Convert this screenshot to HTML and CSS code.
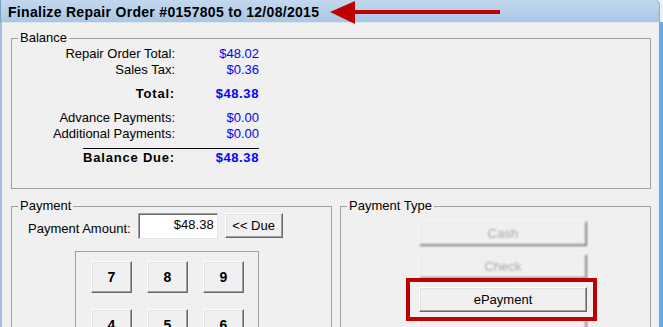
FILE: index.html
```html
<!DOCTYPE html>
<html>
<head>
<meta charset="utf-8">
<title>Finalize Repair Order</title>
<link rel="stylesheet" href="styles.css">
</head>
<body>
<div class="window">
  <div class="titlebar"><span class="title">Finalize Repair Order #0157805 to 12/08/2015</span></div>
  <div class="main">
    <div class="client">
      <fieldset class="group balance">
        <legend>Balance</legend>
        <div class="rows">
          <div class="row"><span class="lbl">Repair Order Total:</span><span class="val">$48.02</span></div>
          <div class="row"><span class="lbl">Sales Tax:</span><span class="val">$0.36</span></div>
          <div class="row bold sp"><span class="lbl">Total:</span><span class="val">$48.38</span></div>
          <div class="row sp"><span class="lbl">Advance Payments:</span><span class="val">$0.00</span></div>
          <div class="row"><span class="lbl">Additional Payments:</span><span class="val">$0.00</span></div>
          <div class="rule"></div>
          <div class="row bold due"><span class="lbl">Balance Due:</span><span class="val">$48.38</span></div>
        </div>
      </fieldset>
      <div class="lower">
        <fieldset class="group payment">
          <legend>Payment</legend>
          <div class="amount">
            <span class="amt-label">Payment Amount:</span>
            <div class="textbox">$48.38</div>
            <button class="btn due-btn">&lt;&lt; Due</button>
          </div>
          <div class="keypad">
            <button class="btn key">7</button>
            <button class="btn key">8</button>
            <button class="btn key">9</button>
            <button class="btn key">4</button>
            <button class="btn key">5</button>
            <button class="btn key">6</button>
            <button class="btn key">1</button>
            <button class="btn key">2</button>
            <button class="btn key">3</button>
          </div>
        </fieldset>
        <fieldset class="group ptype">
          <legend>Payment Type</legend>
          <div class="types">
            <button class="btn type disabled">Cash</button>
            <button class="btn type disabled">Check</button>
            <button class="btn type">ePayment</button>
            <button class="btn type disabled">Other Credit Cards</button>
          </div>
        </fieldset>
      </div>
    </div>
  </div>
  <svg class="arrow" width="180" height="26" viewBox="0 0 180 26">
    <rect x="20" y="10" width="150" height="4" fill="#c00000"/>
    <polygon points="0,12 25,1 25,24" fill="#c00000"/>
  </svg>
  <div class="highlight"></div>
</div>
</body>
</html>
```

FILE: styles.css
```css
html, body {
  margin: 0;
  padding: 0;
  background: #f0f0f0;
}

.window {
  position: relative;
  width: 663px;
  height: 327px;
  overflow: hidden;
  display: flex;
  flex-direction: column;
  background: #f0f0f0;
  font-family: "Liberation Sans", Arial, sans-serif;
  font-size: 13px;
  color: #000;
}

.titlebar {
  flex: none;
  height: 22px;
  margin-right: 3px;
  display: flex;
  align-items: center;
  padding-left: 7px;
  background: linear-gradient(#c3d8ee, #a9c6e4);
  border-left: 1px solid #7a9cc2;
  border-top-right-radius: 5px;
  box-shadow: inset -1px 0 0 #8aaed6;
}

.title {
  font-weight: bold;
  font-size: 14px;
  letter-spacing: 0.3px;
  padding-top: 1px;
}

.main {
  flex: 1;
  display: flex;
  min-height: 0;
}

.client {
  flex: 1;
  padding: 9px 8px 0 9px;
  border-left: 2px solid #9dbde2;
  border-right: 4px solid #62acec;
  box-shadow: inset 0 1px 0 #dfe6ee;
}

.group {
  margin: 0;
  padding: 0;
  border: 1px solid #a0a0a0;
  min-width: 0;
}

.group legend {
  margin-left: 6px;
  padding: 0 2px;
  line-height: 14px;
}

.balance {
  padding-bottom: 22px;
}

.rows {
  margin-left: 28px;
  margin-top: 1px;
  width: 219px;
  display: flex;
  flex-direction: column;
}

.row {
  display: flex;
  line-height: 16px;
  height: 16px;
}

.row .lbl {
  width: 135px;
  text-align: right;
  flex: none;
}

.row .val {
  flex: 1;
  text-align: right;
  color: #0000ff;
}

.row.sp {
  margin-top: 8px;
}

.row.bold {
  font-weight: bold;
  letter-spacing: 0.8px;
}

.row.bold .val {
  letter-spacing: 0.6px;
}

.rule {
  margin-top: 6px;
  margin-left: 43px;
  height: 1px;
  background: #000;
}

.row.due {
  margin-top: 1px;
}

.lower {
  margin-top: 10px;
  display: flex;
  gap: 8px;
  height: 140px;
}

.payment {
  width: 321px;
  box-sizing: border-box;
}

.ptype {
  width: 311px;
  box-sizing: border-box;
}

.amount {
  display: flex;
  align-items: flex-start;
  padding-left: 16px;
}

.amt-label {
  padding-top: 8px;
  line-height: 15px;
  margin-right: 7px;
}

.textbox {
  width: 80px;
  height: 26px;
  box-sizing: border-box;
  background: #fff;
  border: 1px solid;
  border-color: #a0a0a0 #e3e3e3 #e3e3e3 #a0a0a0;
  box-shadow: inset 1px 1px 0 #696969;
  text-align: right;
  padding: 4px 3px 0 0;
  line-height: 14px;
}

.btn {
  font-family: "Liberation Sans", Arial, sans-serif;
  font-size: 13px;
  color: #000;
  background: #f0f0f0;
  border: 1px solid;
  border-color: #ffffff #696969 #696969 #ffffff;
  box-shadow: inset -1px -1px 0 #a0a0a0, inset 1px 1px 0 #e3e3e3;
  padding: 0;
  margin: 0;
  box-sizing: border-box;
}

.due-btn {
  width: 58px;
  height: 25px;
  margin-left: 7px;
}

.keypad {
  margin-top: 12px;
  margin-left: 63px;
  width: 184px;
  box-sizing: border-box;
  border: 1px solid #a0a0a0;
  padding: 9px 14px 10px 15px;
  display: grid;
  grid-template-columns: repeat(3, 41px);
  column-gap: 15px;
  row-gap: 16px;
}

.key {
  width: 41px;
  height: 32px;
  font-weight: bold;
  font-size: 14px;
}

.types {
  display: flex;
  flex-direction: column;
  margin-left: 78px;
  padding-top: 8px;
  gap: 8px;
}

.type {
  width: 168px;
  height: 25px;
}

.type.disabled {
  color: #9c9c9c;
  text-shadow: 1px 1px 0 #ffffff;
  filter: blur(0.9px);
}

.arrow {
  position: absolute;
  left: 330px;
  top: 0;
}

.highlight {
  position: absolute;
  left: 406px;
  top: 278px;
  width: 191px;
  height: 43px;
  box-sizing: border-box;
  border: 4px solid #c00000;
}
```
